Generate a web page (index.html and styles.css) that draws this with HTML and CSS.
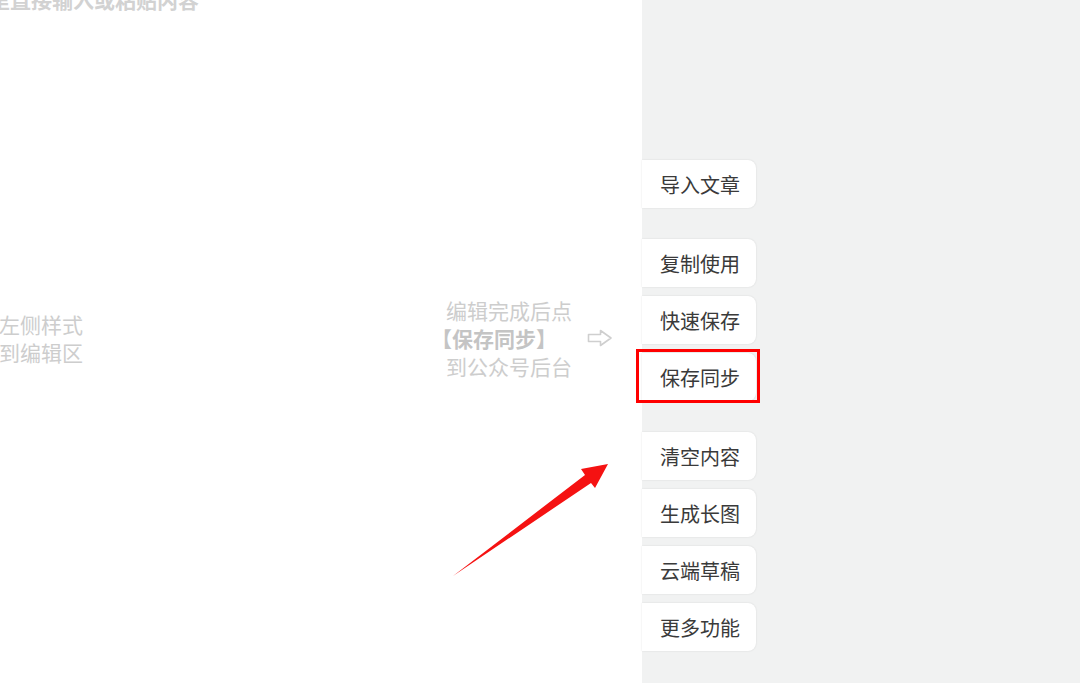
FILE: index.html
```html
<!DOCTYPE html>
<html lang="zh-CN">
<head>
  <meta charset="UTF-8">
  <title>编辑器</title>
  <link rel="stylesheet" href="styles.css">
</head>
<body>
  <main class="editor">
    <p class="top-hint">这里直接输入或粘贴内容</p>

    <div class="guide">
      <div class="hint left-hint">
        <span>左侧样式</span>
        <span>到编辑区</span>
      </div>
      <div class="hint mid-hint">
        <span>编辑完成后点</span>
        <span class="strong">【保存同步】</span>
        <span>到公众号后台</span>
      </div>
      <svg class="hint-arrow" width="26" height="18" viewBox="0 0 26 18">
        <path d="M1.5 5.5 H13.5 V1.5 L24 9 L13.5 16.5 V12.5 H1.5 Z" fill="none" stroke="#cfcfcf" stroke-width="1.6" stroke-linejoin="round"/>
      </svg>
    </div>

    <!-- red pointer drawn over the page -->
    <svg class="pointer" width="642" height="683" viewBox="0 0 642 683">
      <polygon points="453,576 585,475 581,469 608,464 595,488 591,483" fill="#f51212"/>
    </svg>
  </main>

  <aside class="sidebar">
    <div class="group">
      <button class="btn">导入文章</button>
    </div>
    <div class="group">
      <button class="btn">复制使用</button>
      <button class="btn">快速保存</button>
      <button class="btn active">保存同步</button>
    </div>
    <div class="group">
      <button class="btn">清空内容</button>
      <button class="btn">生成长图</button>
      <button class="btn">云端草稿</button>
      <button class="btn">更多功能</button>
    </div>
  </aside>
</body>
</html>
```

FILE: styles.css
```css
html, body {
  margin: 0;
  padding: 0;
  height: 683px;
  overflow: hidden;
}
body {
  display: flex;
  font-family: "Noto Sans CJK SC", "Noto Sans", sans-serif;
  background: #fff;
}
.editor {
  position: relative;
  width: 642px;
  flex-shrink: 0;
  overflow: hidden;
  background: #fff;
}
.top-hint {
  margin: -15px 0 0 -32px;
  font-size: 21px;
  line-height: 28px;
  font-weight: 700;
  color: #d2d2d2;
  white-space: nowrap;
}
.guide {
  display: flex;
  align-items: center;
  margin-top: 283px;
}
.hint {
  display: flex;
  flex-direction: column;
  font-size: 21px;
  line-height: 28px;
  color: #cdcdcd;
  white-space: nowrap;
}
.left-hint {
  margin-left: -1px;
}
.mid-hint {
  margin-left: 363px;
}
.mid-hint .strong {
  font-weight: 700;
  color: #c4c4c4;
  margin-left: -15px;
}
.hint-arrow {
  margin-left: 15px;
}
.pointer {
  position: absolute;
  top: 0;
  left: 0;
  pointer-events: none;
}
.sidebar {
  flex: 1;
  background: #f1f2f2;
  padding-top: 160px;
  display: flex;
  flex-direction: column;
  gap: 31px;
}
.group {
  display: flex;
  flex-direction: column;
  gap: 9px;
}
.btn {
  position: relative;
  width: 114px;
  height: 48px;
  padding: 0 0 0 18px;
  border: none;
  border-radius: 0 8px 8px 0;
  background: #fff;
  box-shadow: 0 0 2px rgba(0, 0, 0, 0.12);
  font-family: inherit;
  font-size: 20px;
  color: #3a3a3a;
  text-align: left;
  cursor: pointer;
}
.btn.active::after {
  content: "";
  position: absolute;
  top: -4px;
  right: -4px;
  bottom: -2px;
  left: -6px;
  border: 3px solid #f00;
}
```
